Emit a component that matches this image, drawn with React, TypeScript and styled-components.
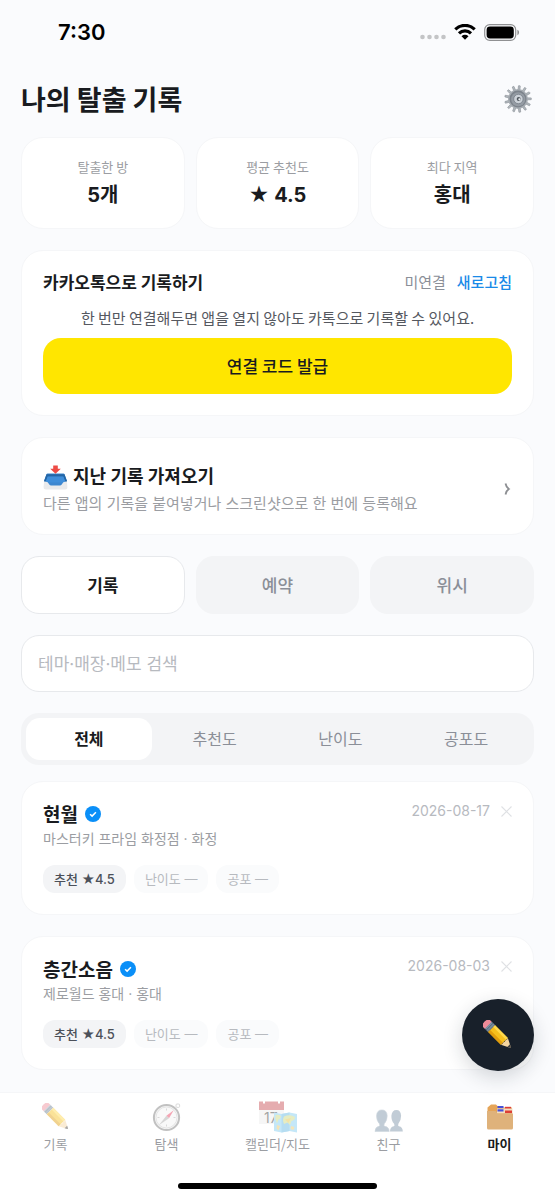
import React, { useState } from "react";
import styled, { createGlobalStyle } from "styled-components";

const KR = `"Noto Sans CJK KR", "Noto Sans", sans-serif`;
const MIX = `Inter, "Noto Sans CJK KR", sans-serif`;

const color = {
  bg: "#fafbfd",
  card: "#ffffff",
  line: "#f5f6f8",
  border: "#e7e9ec",
  fill: "#f3f4f6",
  ink: "#191b20",
  body: "#55585f",
  sub: "#8b8f98",
  muted: "#9b9da2",
  faint: "#b7babf",
  blue: "#1a8ae8",
  yellow: "#ffe600",
};

const GlobalStyle = createGlobalStyle`
  *, *::before, *::after { box-sizing: border-box; }
  body { margin: 0; background: ${color.bg}; color: ${color.ink}; font-family: ${KR}; }
  button, input { font: inherit; color: inherit; margin: 0; border: 0; }
  button { padding: 0; background: none; cursor: pointer; }
  h1, h2, h3, p { margin: 0; }
  svg { display: block; flex: none; }
`;

const Screen = styled.div`
  height: 100vh;
  display: flex;
  flex-direction: column;
  background: ${color.bg};
`;

const StatusBar = styled.header`
  flex: none;
  height: 62px;
  padding: 2px 35px 0 58px;
  display: flex;
  align-items: center;
  justify-content: space-between;
`;

const Clock = styled.span`
  font: 600 22px/28px ${MIX};
  color: #000;
`;

const StatusIcons = styled.div`
  display: flex;
  align-items: center;
  gap: 8px;
`;

const Scroller = styled.main`
  flex: 1;
  min-height: 0;
  overflow-y: auto;
  scrollbar-width: none;
  padding: 17px 21px 21px;
  display: flex;
  flex-direction: column;
  gap: 21px;
  & > * { flex: none; }
`;

const TopGroup = styled.div`
  display: flex;
  flex-direction: column;
  gap: 18px;
`;

const TitleRow = styled.div`
  display: flex;
  align-items: center;
  justify-content: space-between;
`;

const PageTitle = styled.h1`
  font-size: 27px;
  line-height: 40px;
  font-weight: 700;
`;

const Card = styled.section`
  background: ${color.card};
  border: 1px solid ${color.line};
  border-radius: 22px;
  padding: 21px;
`;

const Stats = styled.div`
  display: grid;
  grid-template-columns: repeat(3, 1fr);
  gap: 11px;
`;

const StatCard = styled(Card)`
  padding: 19px 8px;
  display: flex;
  flex-direction: column;
  align-items: center;
  gap: 4px;
`;

const StatLabel = styled.span`
  font-size: 13px;
  line-height: 20px;
  color: ${color.muted};
`;

const StatValue = styled.strong`
  font: 700 20px/28px ${MIX};
`;

const CardHead = styled.div`
  display: flex;
  align-items: center;
  justify-content: space-between;
  height: 20px;
  margin-bottom: 14px;
`;

const CardTitle = styled.h2`
  font-size: 17px;
  line-height: 20px;
  font-weight: 700;
`;

const LinkState = styled.div`
  display: flex;
  gap: 11px;
  font-size: 15px;
  line-height: 20px;
  color: ${color.sub};
`;

const RefreshButton = styled.button`
  color: ${color.blue};
  font-weight: 500;
`;

const Description = styled.p`
  font-size: 15px;
  line-height: 24px;
  text-align: center;
  color: ${color.body};
  margin-bottom: 8px;
`;

const KakaoButton = styled.button`
  display: block;
  width: 100%;
  height: 56px;
  padding-bottom: 2px;
  border-radius: 18px;
  background: ${color.yellow};
  font-size: 17px;
  font-weight: 500;
`;

const ImportCard = styled.button`
  display: flex;
  align-items: center;
  justify-content: space-between;
  background: ${color.card};
  border: 1px solid ${color.line};
  border-radius: 22px;
  padding: 24px 21px 18px;
  text-align: left;
`;

const ImportTitle = styled.span`
  display: flex;
  align-items: center;
  gap: 5px;
  font: 700 18px/30px ${MIX};
`;

const ImportHint = styled.span`
  display: block;
  font: 400 15px/24px ${MIX};
  color: ${color.muted};
`;

const Tabs = styled.div`
  display: grid;
  grid-template-columns: repeat(3, 1fr);
  gap: 11px;
`;

const Tab = styled.button<{ $active: boolean }>`
  height: 58px;
  padding-bottom: 2px;
  border-radius: 18px;
  font-size: 17px;
  font-weight: ${(p) => (p.$active ? 700 : 500)};
  color: ${(p) => (p.$active ? color.ink : color.sub)};
  background: ${(p) => (p.$active ? color.card : color.fill)};
  border: 1px solid ${(p) => (p.$active ? color.border : color.fill)};
`;

const SearchInput = styled.input`
  width: 100%;
  height: 57px;
  padding: 0 16px;
  border: 1px solid ${color.border};
  border-radius: 18px;
  background: ${color.card};
  font: 400 17px ${MIX};
  outline: none;
  &::placeholder { color: ${color.faint}; opacity: 1; }
`;

const ListGroup = styled.div`
  display: flex;
  flex-direction: column;
  gap: 16px;
`;

const Segments = styled.div`
  display: grid;
  grid-template-columns: repeat(4, 1fr);
  padding: 5px;
  border-radius: 18px;
  background: ${color.fill};
`;

const Segment = styled.button<{ $active: boolean }>`
  height: 42px;
  padding-bottom: 2px;
  border-radius: 14px;
  font-size: 16px;
  font-weight: ${(p) => (p.$active ? 700 : 400)};
  color: ${(p) => (p.$active ? color.ink : color.sub)};
  background: ${(p) => (p.$active ? color.card : "transparent")};
`;

const Records = styled.div`
  display: flex;
  flex-direction: column;
  gap: 21px;
`;

const RecordHead = styled.div`
  display: flex;
  justify-content: space-between;
  align-items: flex-start;
`;

const RecordName = styled.h3`
  display: flex;
  align-items: center;
  gap: 7px;
  font-size: 19px;
  line-height: 22px;
  font-weight: 700;
`;

const RecordPlace = styled.p`
  font: 400 14px/28px ${MIX};
  color: ${color.muted};
`;

const RecordMeta = styled.div`
  display: flex;
  align-items: center;
  gap: 11px;
  height: 16px;
`;

const RecordDate = styled.time`
  font: 400 14px/16px ${MIX};
  color: ${color.faint};
`;

const Chips = styled.div`
  display: flex;
  gap: 8px;
  margin-top: 12px;
`;

const Chip = styled.span<{ $filled?: boolean }>`
  height: 28px;
  padding: 0 11px;
  border-radius: 12px;
  font: ${(p) => (p.$filled ? 500 : 400)} 13px/28px ${MIX};
  white-space: nowrap;
  color: ${(p) => (p.$filled ? "#4b5059" : color.faint)};
  background: ${(p) => (p.$filled ? color.fill : "#fafbfc")};
`;

const Dock = styled.div`
  position: relative;
  flex: none;
  background: #fff;
`;

const Fab = styled.button`
  position: absolute;
  right: 21px;
  bottom: calc(100% + 21px);
  width: 72px;
  height: 72px;
  border-radius: 50%;
  background: #18202a;
  box-shadow: 0 6px 20px rgba(24, 32, 42, 0.18);
  display: grid;
  place-items: center;
`;

const NavBar = styled.nav`
  display: grid;
  grid-template-columns: repeat(5, 1fr);
  border-top: 1px solid ${color.line};
  padding-top: 6px;
`;

const NavLink = styled.a<{ $active?: boolean }>`
  display: flex;
  flex-direction: column;
  align-items: center;
  text-decoration: none;
  font-size: 13px;
  line-height: 20px;
  white-space: nowrap;
  font-weight: ${(p) => (p.$active ? 700 : 400)};
  color: ${(p) => (p.$active ? color.ink : color.muted)};
  svg { opacity: ${(p) => (p.$active ? 1 : 0.45)}; }
`;

const NavIcon = styled.span`
  height: 35px;
  display: grid;
  place-items: center;
`;

const HomeArea = styled.div`
  height: 46px;
  padding-top: 29px;
`;

const HomeIndicator = styled.div`
  width: 36%;
  height: 6px;
  margin: 0 auto;
  border-radius: 3px;
  background: #000;
`;

const SignalDots = () => (
  <svg width="26" height="16" viewBox="0 0 26 16" fill="#c3c4c6" aria-hidden="true">
    {[2.5, 9.5, 16.5, 23.5].map((x) => (
      <circle key={x} cx={x} cy="13" r="2.3" />
    ))}
  </svg>
);

const Wifi = () => (
  <svg width="22" height="17" viewBox="0 0 22 17" aria-hidden="true">
    <g fill="none" stroke="#000" strokeWidth="3.2">
      <path d="M1.300 5.300a14 14 0 0 1 19.400 0" />
      <path d="M5 9.400a8.600 8.600 0 0 1 12 0" />
    </g>
    <path d="M11 15.800l-3.500-3.500a5 5 0 0 1 7 0z" fill="#000" />
  </svg>
);

const Battery = () => (
  <svg width="36" height="17" viewBox="0 0 36 17" aria-hidden="true">
    <rect x=".7" y=".7" width="31" height="15.600" rx="5" fill="none" stroke="#8f9092" strokeWidth="1.200" />
    <rect x="2.600" y="2.600" width="27.200" height="11.800" rx="3.400" fill="#000" />
    <path d="M33.400 5.800c2.200.9 2.200 4.500 0 5.400z" fill="#8f9092" />
  </svg>
);

const Gear = () => (
  <svg width="32" height="30" viewBox="0 0 32 30" aria-hidden="true">
    <g fill="#b4babf" stroke="#7d848b" strokeWidth=".5">
      {Array.from({ length: 13 }, (_, i) => (
        <path key={i} d="M15 6l.1-4.200q.9-.5 1.800 0L17 6z" transform={`rotate(${i * 27.69 + 6} 16 15)`} />
      ))}
    </g>
    <circle cx="16" cy="15" r="10" fill="#a7adb3" />
    <circle cx="16" cy="15" r="8.500" fill="#7c838b" />
    <circle cx="16.200" cy="15.300" r="7" fill="#959ca4" />
    <circle cx="16.400" cy="15" r="4.700" fill="#ccd2d8" stroke="#717982" strokeWidth=".7" />
    <circle cx="16.700" cy="15" r="2" fill="#4f565d" />
    <circle cx="17.400" cy="15.300" r="1.100" fill="#eef2f5" />
  </svg>
);

const Inbox = () => (
  <svg width="25" height="25" viewBox="0 0 25 25" aria-hidden="true">
    <path d="M1.200 15L.6 22q-.1 2.500 2.400 2.500h19q2.500 0 2.400-2.500L23.800 15z" fill="#e9eaec" />
    <path d="M4.500 8.500h16q.7 0 1 .7l2.600 7.100q-2.500.2-3.600.7l-2 2.800q-.5.800-1.500.8H8q-1 0-1.500-.8L4.500 17q-1.200-.5-3.600-.7l2.600-7.100q.3-.7 1-.7z" fill="#3d87d0" />
    <path d="M1 16.300l2.500-7h18l2.500 7-1.700.1-2.300-4.600H5l-2.300 4.600z" fill="#2466a5" />
    <path d="M4.600 11.500h15.800l1.800 4.900q-2 .3-2.600 1.100H5.400q-.6-.8-2.600-1.100z" fill="#3f8eda" />
    <path d="M10.200.5h4.600v3.200h3L12.500 8.800 7.200 3.700h3z" fill="#ed4b45" />
  </svg>
);

const Pencil = ({ size = 28 }: { size?: number }) => (
  <svg width={size} height={size} viewBox="0 0 30 30" aria-hidden="true">
    <g transform="rotate(45 15 15)">
      <path d="M-3.300 11.300q0-1.200 1.400-1.200H1.500v9.800h-3.400q-1.400 0-1.400-1.200-1.400-3.700 0-7.400z" fill="#ee8b98" />
      <path d="M1.300 10.100h4.700v9.800H1.300z" fill="#8296a8" />
      <path d="M2.700 10.100h.9v9.800h-.9zM4.600 10.100h.6v9.800h-.6z" fill="#56697b" />
      <path d="M6 10.100h18v9.800H6z" fill="#f6bf1c" />
      <path d="M6 10.100h18v2.600H6z" fill="#ffd94c" />
      <path d="M6 17h18v2.900H6z" fill="#e09c0c" />
      <path d="M24 10.100l8.500 4.300q.8.600 0 1.200L24 19.900q1.200-1.600 0-3.300 1.200-1.600 0-3.200 1.200-1.600 0-3.300z" fill="#f5d5a0" />
      <path d="M30 13.100l2.500 1.300q.8.600 0 1.200L30 16.900z" fill="#3d3d3d" />
    </g>
  </svg>
);

const Compass = () => (
  <svg width="30" height="30" viewBox="0 0 30 30" aria-hidden="true">
    <rect x="24" y="2" width="3.600" height="3.400" rx="1" fill="#fff" stroke="#999" strokeWidth=".8" />
    <circle cx="14.500" cy="15.500" r="12.600" fill="#e9e9e9" stroke="#777" strokeWidth="2" />
    <circle cx="14.500" cy="15.500" r="10.500" fill="#f2f2f2" stroke="#bbb" strokeWidth=".8" />
    <path d="M14.500 6.500v2M14.500 22.500v2M5.500 15.500h2M21.500 15.500h2" stroke="#999" strokeWidth=".8" />
    <path d="M21.700 8.300l-4.700 8-2.600-2.500z" fill="#e8395a" />
    <path d="M6.800 23.200l7.600-9.400 2.600 2.500z" fill="#a6a6a6" />
  </svg>
);

const CalendarMap = () => (
  <svg width="40" height="35" viewBox="0 0 40 35" aria-hidden="true">
    <path d="M1 9h25v16H1z" fill="#ececec" />
    <path d="M1 2.500h25V11H1z" fill="#c6494f" />
    <path d="M5 1.500h2v3H5zM20 1.500h2v3h-2z" fill="#fff" />
    <text x="6" y="24" fontFamily="Inter, sans-serif" fontSize="14" fill="#333">17</text>
    <path d="M16 13.500l7.500 1.500 8-1.500 7.500 1.500v18.500l-7.500-1.500-8 1.500-7.500-1.500z" fill="#7ecbf0" />
    <path d="M23.500 15l8-1.500V32l-8 1.500z" fill="#5fb4e2" />
    <path d="M17.500 16q4.500-1 5.500 1.500-1 3-2.500 3l-1.500 4-1.500-4.500zM26 17.500q6-2.500 11 .5 0 3-3.500 4l-1.500 4-2.500-2.500-3.500 1.500q-2-4 0-7.500z" fill="#c8d779" />
    <path d="M27 20.500l6-1.500-2.500 5z" fill="#e6c03c" />
    <path d="M19 26l3 1-1.500 4.500-2-2zM33 27l3.500 1-1 3-3-1z" fill="#e6c564" />
  </svg>
);

const Friends = () => (
  <svg width="30" height="30" viewBox="0 0 30 30" aria-hidden="true" fill="#7890a5">
    <path d="M16 29.500q0-4.500 3.800-5.200 1.300-.6.300-2.600-2.900-3-2.700-8 .6-5.800 5-5.800t4.700 5.800q0 5-2.700 8-.9 2 .5 2.600 3.900.7 3.900 5.200z" />
    <path d="M1 29.500q0-4.500 4-5.200 1.400-.6.400-2.600-2.900-3-2.900-8Q2.900 7.900 7.900 7.900t5.300 5.800q0 5-2.900 8-.9 2 .5 2.600 4.400.7 4.400 5.200z" stroke="#93a7b8" strokeWidth=".6" />
  </svg>
);

const Folder = () => (
  <svg width="28" height="28" viewBox="0 0 28 28" aria-hidden="true">
    <path d="M1.500 10V4.500L5 1.500h5L13 4.500h13V12H1.500z" fill="#e5a458" />
    <path d="M11.500 3h6v2.200h-6z" fill="#4650d8" />
    <path d="M19 3.800h6V6h-6z" fill="#dd3e35" />
    <path d="M11 5.500h15.500v5H11z" fill="#f3dfc2" />
    <path d="M11.500 6.300h6v2.200h-6z" fill="#4650d8" />
    <path d="M19 7.500h7v2.600h-7z" fill="#dd3e35" />
    <path d="M1 8h8.500l2 2.500H27V25q0 1.500-1.500 1.500h-23Q1 26.500 1 25z" fill="#dfb27b" />
  </svg>
);

const Verified = () => (
  <svg width="16" height="16" viewBox="0 0 16 16" role="img" aria-label="인증됨">
    <circle cx="8" cy="8" r="8" fill="#0a8ff8" />
    <path d="M5.100 8.200l2 1.900 3.800-3.900" fill="none" stroke="#fff" strokeWidth="1.500" />
  </svg>
);

const CrossButton = styled.button`
  width: 11px;
  height: 11px;
`;

const Cross = () => (
  <svg width="11" height="11" viewBox="0 0 11 11" aria-hidden="true">
    <path d="M.5.500l10 10M10.500.500l-10 10" stroke="#dfe1e4" strokeWidth="1.100" />
  </svg>
);

const Chevron = () => (
  <svg width="9" height="14" viewBox="0 0 9 14" aria-hidden="true">
    <path d="M2.500 1.500C3 4 4 5.800 5.800 7 4 8.200 3 10 2.500 12.500" fill="none" stroke="#8c8e92" strokeWidth="1.800" />
  </svg>
);

const stats = [
  { label: "탈출한 방", value: "5개" },
  { label: "평균 추천도", value: "★ 4.5" },
  { label: "최다 지역", value: "홍대" },
];

const records = [
  { name: "현월", place: "마스터키 프라임 화정점 · 화정", date: "2026-08-17", score: "4.5" },
  { name: "층간소음", place: "제로월드 홍대 · 홍대", date: "2026-08-03", score: "4.5" },
];

const navItems = [
  { label: "기록", icon: <Pencil /> },
  { label: "탐색", icon: <Compass /> },
  { label: "캘린더/지도", icon: <CalendarMap /> },
  { label: "친구", icon: <Friends /> },
  { label: "마이", icon: <Folder />, active: true },
];

export default function App() {
  const [tab, setTab] = useState("기록");
  const [segment, setSegment] = useState("전체");

  return (
    <Screen>
      <GlobalStyle />
      <StatusBar>
        <Clock>7:30</Clock>
        <StatusIcons>
          <SignalDots />
          <Wifi />
          <Battery />
        </StatusIcons>
      </StatusBar>

      <Scroller>
        <TopGroup>
          <TitleRow>
            <PageTitle>나의 탈출 기록</PageTitle>
            <button aria-label="설정">
              <Gear />
            </button>
          </TitleRow>
          <Stats>
            {stats.map((s) => (
              <StatCard key={s.label}>
                <StatLabel>{s.label}</StatLabel>
                <StatValue>{s.value}</StatValue>
              </StatCard>
            ))}
          </Stats>
        </TopGroup>

        <Card>
          <CardHead>
            <CardTitle>카카오톡으로 기록하기</CardTitle>
            <LinkState>
              <span>미연결</span>
              <RefreshButton>새로고침</RefreshButton>
            </LinkState>
          </CardHead>
          <Description>한 번만 연결해두면 앱을 열지 않아도 카톡으로 기록할 수 있어요.</Description>
          <KakaoButton>연결 코드 발급</KakaoButton>
        </Card>

        <ImportCard>
          <span>
            <ImportTitle>
              <Inbox />
              지난 기록 가져오기
            </ImportTitle>
            <ImportHint>다른 앱의 기록을 붙여넣거나 스크린샷으로 한 번에 등록해요</ImportHint>
          </span>
          <Chevron />
        </ImportCard>

        <Tabs>
          {["기록", "예약", "위시"].map((t) => (
            <Tab key={t} $active={t === tab} onClick={() => setTab(t)}>
              {t}
            </Tab>
          ))}
        </Tabs>

        <SearchInput type="search" aria-label="기록 검색" placeholder="테마·매장·메모 검색" />

        <ListGroup>
          <Segments>
            {["전체", "추천도", "난이도", "공포도"].map((s) => (
              <Segment key={s} $active={s === segment} onClick={() => setSegment(s)}>
                {s}
              </Segment>
            ))}
          </Segments>
          <Records>
            {records.map((r) => (
              <Card as="article" key={r.name}>
                <RecordHead>
                  <RecordName>
                    {r.name}
                    <Verified />
                  </RecordName>
                  <RecordMeta>
                    <RecordDate>{r.date}</RecordDate>
                    <CrossButton aria-label="삭제">
                      <Cross />
                    </CrossButton>
                  </RecordMeta>
                </RecordHead>
                <RecordPlace>{r.place}</RecordPlace>
                <Chips>
                  <Chip $filled>추천 ★{r.score}</Chip>
                  <Chip>난이도 —</Chip>
                  <Chip>공포 —</Chip>
                </Chips>
              </Card>
            ))}
          </Records>
        </ListGroup>
      </Scroller>

      <Dock>
        <Fab aria-label="기록 작성">
          <Pencil size={30} />
        </Fab>
        <NavBar>
          {navItems.map((n) => (
            <NavLink key={n.label} href="#" $active={n.active} aria-current={n.active ? "page" : undefined}>
              <NavIcon>{n.icon}</NavIcon>
              {n.label}
            </NavLink>
          ))}
        </NavBar>
        <HomeArea>
          <HomeIndicator />
        </HomeArea>
      </Dock>
    </Screen>
  );
}
